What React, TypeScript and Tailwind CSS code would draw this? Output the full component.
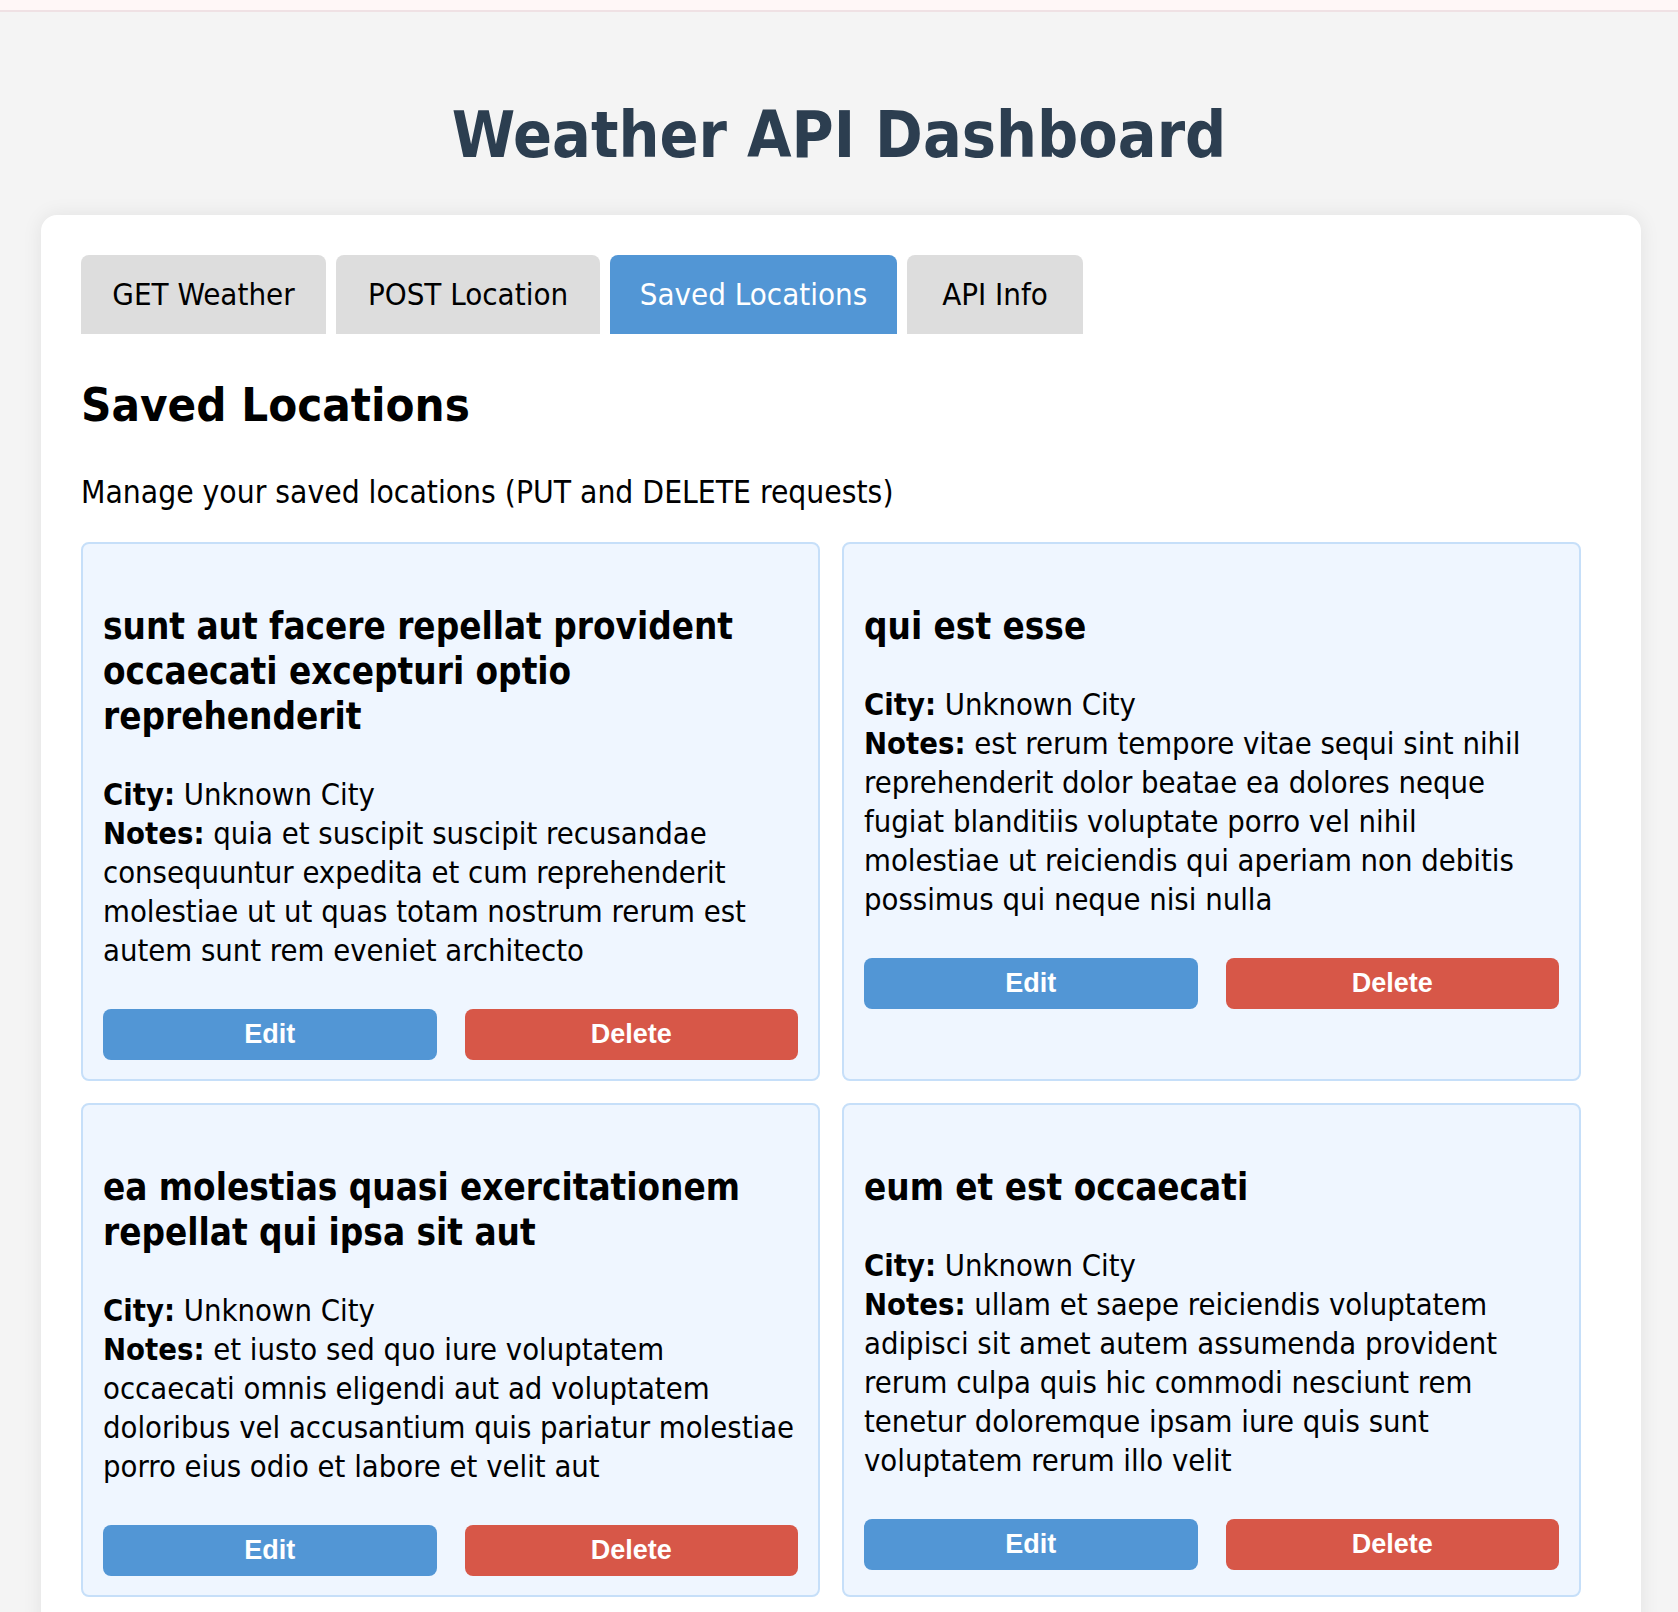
import React from 'react';

// notes are kept line by line, as the reference wraps them
const locations = [
  {
    id: 1,
    title: 'sunt aut facere repellat provident occaecati excepturi optio reprehenderit',
    notes: [
      'quia et suscipit suscipit recusandae',
      'consequuntur expedita et cum reprehenderit',
      'molestiae ut ut quas totam nostrum rerum est',
      'autem sunt rem eveniet architecto',
    ],
  },
  {
    id: 2,
    title: 'qui est esse',
    notes: [
      'est rerum tempore vitae sequi sint nihil',
      'reprehenderit dolor beatae ea dolores neque',
      'fugiat blanditiis voluptate porro vel nihil',
      'molestiae ut reiciendis qui aperiam non debitis',
      'possimus qui neque nisi nulla',
    ],
  },
  {
    id: 3,
    title: 'ea molestias quasi exercitationem repellat qui ipsa sit aut',
    notes: [
      'et iusto sed quo iure voluptatem',
      'occaecati omnis eligendi aut ad voluptatem',
      'doloribus vel accusantium quis pariatur molestiae',
      'porro eius odio et labore et velit aut',
    ],
  },
  {
    id: 4,
    title: 'eum et est occaecati',
    notes: [
      'ullam et saepe reiciendis voluptatem',
      'adipisci sit amet autem assumenda provident',
      'rerum culpa quis hic commodi nesciunt rem',
      'tenetur doloremque ipsam iure quis sunt',
      'voluptatem rerum illo velit',
    ],
  },
];

const tabs = [
  { label: 'GET Weather', width: 'w-[245px]' },
  { label: 'POST Location', width: 'w-[264px]' },
  { label: 'Saved Locations', width: 'w-[287px]', active: true },
  { label: 'API Info', width: 'w-[176px]' },
];

export default function App() {
  return (
    <div className="min-h-screen bg-[#f4f4f4] font-['DejaVu_Sans_Condensed','DejaVu_Sans',sans-serif] [font-stretch:condensed] text-black">
      <div className="h-[12px] bg-[#fff7f7] border-b-2 border-[#efe1e4]" />

      <h1 className="mt-[85px] text-center text-[64px] leading-[77px] font-bold text-[#2c3e50]">
        Weather API Dashboard
      </h1>

      <div className="ml-[41px] mt-[41px] w-[1600px] bg-white rounded-[16px] shadow-[0_0_20px_rgba(0,0,0,0.08)] px-[40px] pt-[40px] pb-[40px]">
        {/* Tabs */}
        <div className="flex gap-[10px]">
          {tabs.map(tab => (
            <button
              key={tab.label}
              className={`${tab.width} h-[79px] rounded-t-[8px] flex items-center justify-center text-[31px] ${
                tab.active ? 'bg-[#5296d5] text-white' : 'bg-[#dddddd] text-black'
              }`}
            >
              {tab.label}
            </button>
          ))}
        </div>

        <h2 className="mt-[42px] text-[47px] leading-[58px] font-bold">Saved Locations</h2>
        <p className="mt-[39px] text-[31.5px] leading-[39px]">Manage your saved locations (PUT and DELETE requests)</p>

        {/* Location cards */}
        <div className="mt-[30px] grid grid-cols-[739px_739px] gap-[22px]">
          {locations.map(loc => (
            <div key={loc.id} className="bg-[#eff6ff] border-2 border-[#c6dff9] rounded-[8px] px-[20px] pt-[20px] pb-[19px]">
              <h3 className="mt-[40px] mb-[34px] text-[36.5px] leading-[45px] font-bold">{loc.title}</h3>
              <p className="pt-[2px] text-[30.7px] leading-[39px] whitespace-nowrap">
                <strong>City:</strong> Unknown City
                <br />
                <strong>Notes:</strong> {loc.notes[0]}
                {loc.notes.slice(1).map(line => (
                  <React.Fragment key={line}>
                    <br />
                    {line}
                  </React.Fragment>
                ))}
              </p>
              <div className="mt-[39px] grid grid-cols-2 gap-[28px] font-['Liberation_Sans',Arial,sans-serif] [font-stretch:normal]">
                <button className="h-[51px] rounded-[8px] bg-[#5296d5] text-white text-[27px] font-bold">Edit</button>
                <button className="h-[51px] rounded-[8px] bg-[#d75748] text-white text-[27px] font-bold">Delete</button>
              </div>
            </div>
          ))}
        </div>
      </div>
    </div>
  );
}
